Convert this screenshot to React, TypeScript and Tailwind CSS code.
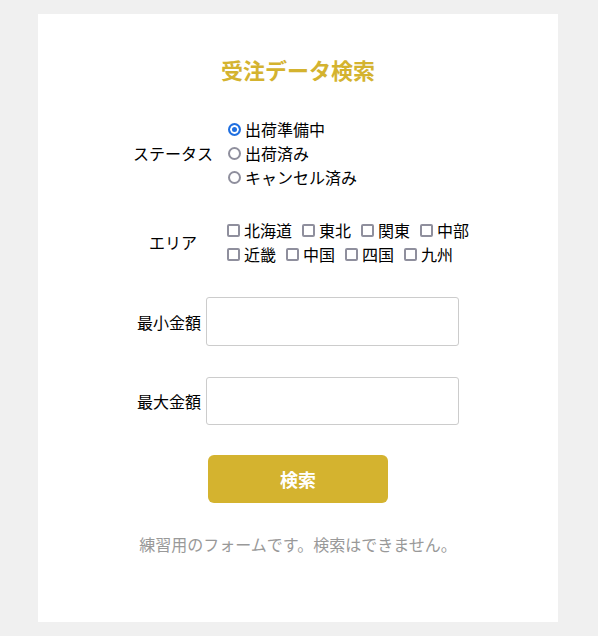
import React from "react";

const areas1 = ["北海道", "東北", "関東", "中部"];
const areas2 = ["近畿", "中国", "四国", "九州"];

export default function App() {
  return (
    <div
      className="min-h-[636px] bg-[#f0f0f0] pl-[38px] py-[14px] text-[16px] text-black"
      style={{ fontFamily: '"Noto Sans CJK JP", "Noto Sans", sans-serif' }}
    >
      <div className="h-[608px] w-[520px] bg-white pt-[39px]">
        <h1 className="text-center text-[22px] font-bold leading-8 text-[#d4b32f]">受注データ検索</h1>

        <div className="mt-[32px] flex items-center pl-[87px]">
          <div className="w-24 text-center leading-6">ステータス</div>
          <div className="ml-[7px] flex flex-col">
            {["出荷準備中", "出荷済み", "キャンセル済み"].map((s, i) => (
              <label key={s} className="flex h-6 items-center gap-[4px] leading-6">
                <input
                  type="radio"
                  name="status"
                  defaultChecked={i === 0}
                  className="h-[13px] w-[13px] appearance-none rounded-full border-2 border-[#8f8f9d] checked:border-[#1f6fe0] checked:bg-[#1f6fe0] checked:shadow-[inset_0_0_0_2px_white]"
                />
                <span>{s}</span>
              </label>
            ))}
          </div>
        </div>

        <div className="mt-[29px] flex items-center pl-[87px]">
          <div className="w-24 text-center leading-6">エリア</div>
          <div className="ml-[6px] flex flex-col">
            {[areas1, areas2].map((row, r) => (
              <div key={r} className="flex h-6 items-center">
                {row.map((a) => (
                  <label key={a} className="mr-[10px] flex items-center gap-[4px] leading-6">
                    <input
                      type="checkbox"
                      className="h-[13px] w-[13px] appearance-none rounded-[2px] border-2 border-[#8f8f9d]"
                    />
                    <span>{a}</span>
                  </label>
                ))}
              </div>
            ))}
          </div>
        </div>

        <div className="mt-[31px] flex items-center justify-center gap-[5px]">
          <span className="leading-6">最小金額</span>
          <input type="text" className="h-[49px] w-[253px] rounded-[3px] border border-[#cccccc] bg-white px-2" />
        </div>

        <div className="mt-[31px] flex items-center justify-center gap-[5px]">
          <span className="leading-6">最大金額</span>
          <input type="text" className="h-[48px] w-[253px] rounded-[3px] border border-[#cccccc] bg-white px-2" />
        </div>

        <div className="mt-[30px] flex justify-center">
          <button className="h-[48px] w-[180px] rounded-[6px] bg-[#d4b32f] text-[18px] font-bold text-white">
            検索
          </button>
        </div>

        <p className="mt-[29px] text-center leading-6 text-[#999999]">
          練習用のフォームです。検索はできません。
        </p>
      </div>
    </div>
  );
}
